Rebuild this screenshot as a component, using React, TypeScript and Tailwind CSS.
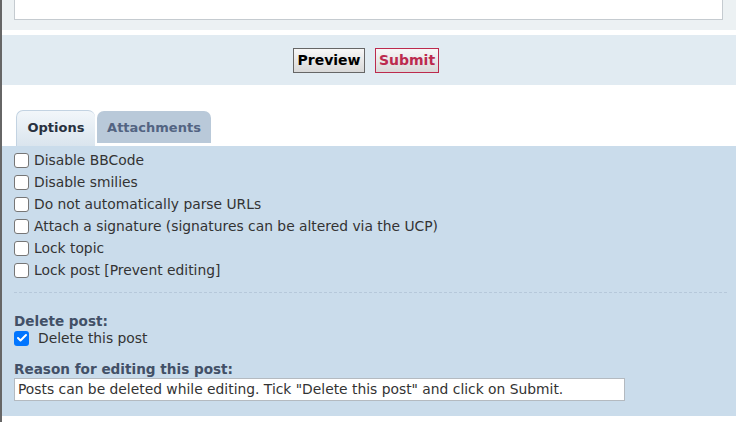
import { Check } from "lucide-react";

const options = [
  "Disable BBCode",
  "Disable smilies",
  "Do not automatically parse URLs",
  "Attach a signature (signatures can be altered via the UCP)",
  "Lock topic",
  "Lock post [Prevent editing]",
];

function Box({ checked = false }: { checked?: boolean }) {
  if (checked) {
    return (
      <span className="flex h-[15px] w-[15px] shrink-0 items-center justify-center rounded-[3px] bg-[#0075ff]">
        <Check className="h-[12px] w-[12px] text-white" strokeWidth={4} />
      </span>
    );
  }
  return (
    <span className="block h-[15px] w-[15px] shrink-0 rounded-[3px] border border-[#767676] bg-white" />
  );
}

export default function App() {
  return (
    <div className="h-[422px] w-[738px] overflow-hidden border-l-2 border-[#666] bg-white font-['Verdana','DejaVu_Sans',sans-serif] text-[13.85px] text-[#333]">
      {/* bottom of the message box */}
      <div className="mr-[2px] h-[30px] bg-[#ecf1f3] pl-[12px] pr-[13px]">
        <div className="h-[20px] border border-t-0 border-[#c5cbd0] bg-white" />
      </div>

      {/* preview / submit */}
      <div className="mr-[2px] mt-[5px] flex h-[50px] items-center justify-center gap-[10px] bg-[#e1ebf2] pr-[6px]">
        <button
          type="button"
          className="h-[25px] w-[72px] border border-[#666] bg-gradient-to-b from-[#f7f7f7] to-[#d9d9d9] text-[14px] font-bold text-black"
        >
          Preview
        </button>
        <button
          type="button"
          className="h-[25px] w-[64px] border border-[#bc2a4d] bg-gradient-to-b from-[#f7f7f7] to-[#d9d9d9] text-[14px] font-bold text-[#bc2a4d]"
        >
          Submit
        </button>
      </div>

      {/* tabs */}
      <div className="mt-[25px] flex items-end gap-[2px] pl-[14px]">
        <div className="flex h-[36px] w-[79px] items-center justify-center rounded-t-[7px] border-l border-t border-[#c3d3e2] bg-gradient-to-b from-[#f2f6fa] to-[#dae5ee] pb-[2px] text-[13px] font-bold text-[#28313f]">
          Options
        </div>
        <div className="mb-[3px] flex h-[32px] w-[114px] items-center justify-center rounded-t-[7px] bg-[#b9c9d9] pt-[1px] text-[13px] font-bold text-[#536482]">
          Attachments
        </div>
      </div>

      {/* options panel */}
      <div className="mr-[2px] bg-[#cadceb] pb-[15px] pl-[12px] pr-[9px] pt-[3px]">
        {options.map((label) => (
          <div key={label} className="flex h-[22px] items-center gap-[5px]">
            <Box />
            <span>{label}</span>
          </div>
        ))}

        <div className="mt-[11px] border-t border-dashed border-[#b6c8da]" />

        <div className="mt-[20px] flex h-[16px] items-center text-[13.6px] font-bold text-[#425067]">
          Delete post:
        </div>
        <div className="flex h-[18px] items-center gap-[9px]">
          <Box checked />
          <span>Delete this post</span>
        </div>

        <div className="mt-[14px] flex h-[16px] items-center text-[13.6px] font-bold text-[#425067]">
          Reason for editing this post:
        </div>
        <div className="mt-[1px] flex h-[23px] w-[611px] items-center border border-[#b4bac0] bg-white px-[3px]">
          Posts can be deleted while editing. Tick "Delete this post" and click on Submit.
        </div>
      </div>
    </div>
  );
}
